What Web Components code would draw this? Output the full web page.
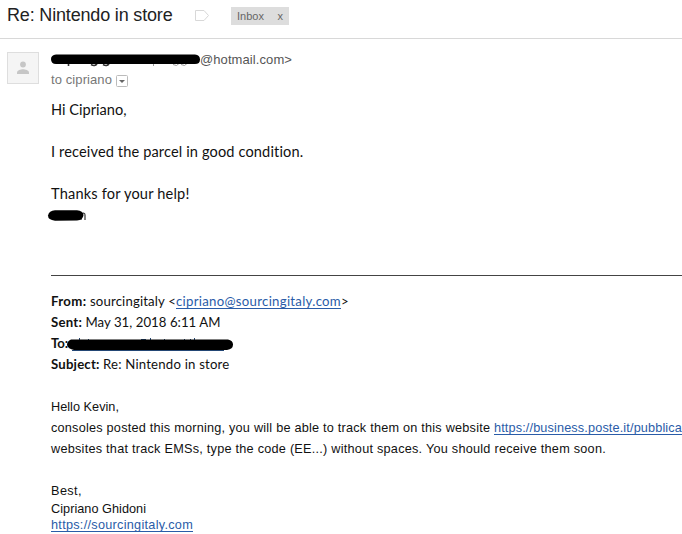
<!DOCTYPE html>
<html lang="en">
<head>
<meta charset="utf-8">
<title>Re: Nintendo in store</title>
<style>
html,body{margin:0;background:#fff;overflow:hidden}
body{width:682px;height:534px;font-family:"Liberation Sans",Arial,sans-serif;color:#111}
</style>
</head>
<body>
<mail-page></mail-page>
<script>
/* A run of text whose tracking is adjusted to fill a given width. */
class FitText extends HTMLElement{
  connectedCallback(){
    const r=this.attachShadow({mode:'open'});
    r.innerHTML='<style>:host{display:inline-block;white-space:pre;vertical-align:baseline}</style><slot></slot>';
    const w=parseFloat(this.getAttribute('w')),n=this.textContent.length;
    const have=this.getBoundingClientRect().width;
    this.style.letterSpacing=((w-have)/n).toFixed(4)+'px';
  }
}
/* One line of mail text. */
class MailLine extends HTMLElement{
  connectedCallback(){
    this.attachShadow({mode:'open'}).innerHTML='<style>:host{display:flex;align-items:baseline;height:21px;line-height:21px;white-space:pre}</style><slot></slot>';
  }
}
class MailLink extends HTMLElement{
  connectedCallback(){
    this.attachShadow({mode:'open'}).innerHTML='<style>:host{display:inline-block;color:#2a5ca8;text-decoration:none}span{display:block;background:linear-gradient(#2a5ca8,#2a5ca8) 0 var(--u,17px)/100% 1px no-repeat}</style><span><slot></slot></span>';
  }
}
class LabelChip extends HTMLElement{
  connectedCallback(){
    this.attachShadow({mode:'open'}).innerHTML='<style>:host{display:flex;justify-content:space-between;box-sizing:border-box;width:58px;height:18px;padding:0 6px;background:#ddd;color:#666;font-size:11px;line-height:19px}</style><slot></slot><span>x</span>';
  }
}
class UserAvatar extends HTMLElement{
  connectedCallback(){
    this.attachShadow({mode:'open'}).innerHTML='<style>:host{display:block;width:32px;height:32px}svg{display:block}</style><svg width="32" height="32"><rect x=".5" y=".5" width="31" height="31" fill="#f5f5f5" stroke="#dedede"/><circle cx="16" cy="12.500" r="2.900" fill="#c6c6c6"/><path d="M10 22v-1.600c0-2.200 4-3.200 6-3.200s6 1 6 3.200v1.600z" fill="#c6c6c6"/></svg>';
  }
}
/* Black marker stroke over hidden text. */
class RedactedText extends HTMLElement{
  connectedCallback(){
    const k=this.getAttribute('kind');
    const art={
      sender:'<svg width="151" height="18" viewBox="51 52 151 18"><g fill="none" stroke="#333" stroke-width="1.6"><path d="M68.5 62v4M91 64.500q4 2.500 6-1v-2M103 64.500q4 2.500 6-1v-2"/><g stroke="#999" stroke-width="1"><path d="M153.500 62v4M173 64.500q4 2.500 6-1v-2M181 64.500q4 2.500 6-1v-2"/></g></g><path d="M56 54.500H195Q200 55 200 59.500 200 64 195 64H56Q51 64 51 59 51 55 56 54.500z"/></svg>',
      name:'<svg width="40" height="14" viewBox="47 209 40 14"><path d="M81 220v-6q4-2 4 1v5" fill="none" stroke="#333" stroke-width="1.200"/><path d="M55 210.300H77Q83 211 83.500 215 83 220 77 220.500L55 220.700Q48 220 48 215.500 49 210.500 55 210.300z"/></svg>',
      to:'<svg width="168" height="14" viewBox="66 337 168 14"><g fill="none" stroke="#234674"><path d="M79.500 338v3M88.500 339v3M141 339.500h5M150.500 338v3M164.500 339v2M184.500 339v2M190.500 339v2M194.500 338v3M72 350.500H224"/></g><path d="M71 339.500H228Q233 340.500 233 344.500 233 349 227 350H74Q68 349 67 345 67 341 71 339.500z"/></svg>'
    }[k];
    this.attachShadow({mode:'open'}).innerHTML='<style>:host{display:block}svg{display:block}</style>'+art;
  }
}
class MailPage extends HTMLElement{
  connectedCallback(){
    this.attachShadow({mode:'open'}).innerHTML=`
<style>
:host{display:block;width:682px;height:534px;overflow:hidden;background:#fff}
header{display:flex;height:38px;border-bottom:1px solid #d8d8d8;padding-left:7px;align-items:flex-start}
h1{margin:4px 0 0;font-size:18px;line-height:22px;font-weight:400;color:#222;width:188px}
.tag{margin-top:10px;width:36px}
label-chip{margin-top:7px}
.sender{display:flex;padding:13px 0 0 7px;height:47px}
.who{margin-left:12px;font-size:13px;line-height:20px;color:#555}
.addr{display:flex;height:20px;margin-top:-2px}
.addr redacted-text{width:149px;margin-top:2px}
.to{display:flex;color:#777;gap:4px}
.to svg{margin-top:5px}
main{padding-left:51px}
.c{font-family:Lato,"Open Sans",sans-serif;font-size:14.6px;color:#111}
.m{font-size:13.2px}
.c redacted-text[kind=name]{margin-left:-4px;margin-top:5px}
.c redacted-text[kind=to]{margin-left:-2px;align-self:flex-start;margin-top:4px}
hr{margin:50px 0 15px;border:0;height:1px;background:#444}
.a{font-size:12.7px;color:#111;margin-top:22px;--u:16px}
b{font-weight:700}
</style>
<header><h1><fit-text w="165.500">Re: Nintendo in store</fit-text></h1>
<svg class="tag" height="12" viewBox="0 0 36 12"><path d="M.5.500H9L13.500 5.500 9 10.500H.500z" fill="#fff" stroke="#d8d8d8"/></svg>
<label-chip>Inbox</label-chip></header>
<section class="sender"><user-avatar></user-avatar><div class="who">
<div class="addr"><redacted-text kind="sender"></redacted-text><fit-text w="92">@hotmail.com&gt;</fit-text></div>
<div class="to"><fit-text w="61">to cipriano</fit-text><svg width="13" height="13"><rect x=".5" y=".5" width="11" height="11" rx="1" fill="#fff" stroke="#bbb"/><path d="M3 5h6L6 8z" fill="#666"/></svg></div></div></section>
<main>
<div class="c"><mail-line><fit-text w="75.500">Hi Cipriano,</fit-text></mail-line><mail-line></mail-line>
<mail-line><fit-text w="252.500">I received the parcel in good condition.</fit-text></mail-line><mail-line></mail-line>
<mail-line><fit-text w="138.500">Thanks for your help!</fit-text></mail-line>
<mail-line><redacted-text kind="name"></redacted-text></mail-line></div>
<hr>
<div class="c m">
<mail-line><b><fit-text w="39">From: </fit-text></b><fit-text w="86">sourcingitaly &lt;</fit-text><mail-link><fit-text w="165">cipriano@sourcingitaly.com</fit-text></mail-link><fit-text w="8">&gt;</fit-text></mail-line>
<mail-line><b><fit-text w="34.5">Sent: </fit-text></b><fit-text w="135">May 31, 2018 6:11 AM</fit-text></mail-line>
<mail-line><b><fit-text w="17">To:</fit-text></b><redacted-text kind="to"></redacted-text></mail-line>
<mail-line><b><fit-text w="52">Subject: </fit-text></b><fit-text w="126.500">Re: Nintendo in store</fit-text></mail-line></div>
<div class="a">
<mail-line><fit-text w="68">Hello Kevin,</fit-text></mail-line>
<mail-line><fit-text w="443">consoles posted this morning, you will be able to track them on this website </fit-text><mail-link><fit-text w="188">https://business.poste.it/pubblica</fit-text></mail-link></mail-line>
<mail-line><fit-text w="555">websites that track EMSs, type the code (EE...) without spaces. You should receive them soon.</fit-text></mail-line>
<mail-line></mail-line>
<mail-line style="height:18px"><fit-text w="31">Best,</fit-text></mail-line>
<mail-line style="height:16px"><fit-text w="95">Cipriano Ghidoni</fit-text></mail-line>
<mail-line><mail-link><fit-text w="142">https://sourcingitaly.com</fit-text></mail-link></mail-line></div>
</main>`;
  }
}
customElements.define('fit-text',FitText);
customElements.define('mail-line',MailLine);
customElements.define('mail-link',MailLink);
customElements.define('label-chip',LabelChip);
customElements.define('user-avatar',UserAvatar);
customElements.define('redacted-text',RedactedText);
customElements.define('mail-page',MailPage);
</script>
</body>
</html>
